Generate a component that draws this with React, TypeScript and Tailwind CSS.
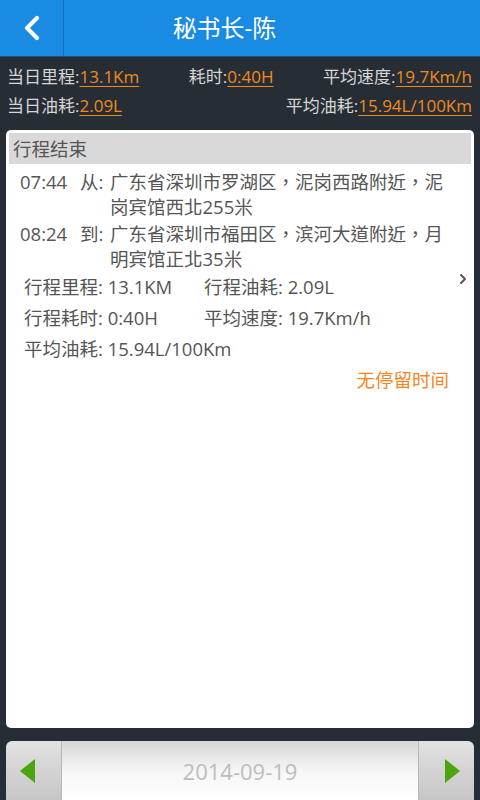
import { ChevronRight } from 'lucide-react';

const font = { fontFamily: '"Open Sans", "Noto Sans CJK SC", sans-serif' };
const tcFont = { fontFamily: '"Open Sans", "Noto Sans CJK TC", "Noto Sans CJK SC", sans-serif' };

const Stat = ({ label, value }: { label: string; value: string }) => (
  <span className="whitespace-nowrap">
    <span className="text-[#d6d6d6]">{label}</span>
    <span className="text-[#f08a1c] underline underline-offset-[3px] decoration-1">{value}</span>
  </span>
);

const App = () => {
  return (
    <div className="w-[480px] h-[800px] bg-[#272d35] flex flex-col overflow-hidden" style={font}>
      <header className="h-[57px] shrink-0 bg-[#1a8be3] border-b border-[#1d4f7e] flex">
        <button className="w-16 flex items-center justify-center border-r border-[#146fbd]">
          <svg width="20" height="26" viewBox="0 0 20 26">
            <path d="M15 3 L5 13 L15 23" fill="none" stroke="white" strokeWidth="4.2" strokeLinecap="round" strokeLinejoin="round" />
          </svg>
        </button>
        <h1 className="flex-1 flex items-center justify-center text-white text-[24px] pb-[1px]">秘书长-陈</h1>
        <div className="w-[95px]"></div>
      </header>

      <div className="shrink-0 text-[17px] leading-[29px] pt-[5px] pb-[10px] px-[7px] pr-[8px]">
        <div className="flex justify-between">
          <Stat label="当日里程:" value="13.1Km" />
          <Stat label="耗时:" value="0:40H" />
          <Stat label="平均速度:" value="19.7Km/h" />
        </div>
        <div className="flex justify-between">
          <Stat label="当日油耗:" value="2.09L" />
          <Stat label="平均油耗:" value="15.94L/100Km" />
        </div>
      </div>

      <div className="relative flex-1 mx-[6px] mb-[13px] bg-white rounded-[5px] p-[3px] text-[18.5px] text-[#555]">
        <div className="h-[31px] bg-[#d9d9d9] pl-[4px] flex items-center text-[#555]">行程结束</div>

        <div className="pl-[11px] pr-[20px] pt-[5px] leading-[25px]">
          <div className="flex">
            <span className="w-[60px] shrink-0">07:44</span>
            <span className="w-[30px] shrink-0">从:</span>
            <span className="flex-1" style={tcFont}>广东省深圳市罗湖区，泥岗西路附近，泥岗宾馆西北255米</span>
          </div>
          <div className="flex mt-[2px]">
            <span className="w-[60px] shrink-0">08:24</span>
            <span className="w-[30px] shrink-0">到:</span>
            <span className="flex-1" style={tcFont}>广东省深圳市福田区，滨河大道附近，月明宾馆正北35米</span>
          </div>
        </div>

        <div className="pl-[15px] pr-[22px] leading-[31px]">
          <div className="grid grid-cols-[180px_1fr]">
            <span>行程里程: 13.1KM</span>
            <span>行程油耗: 2.09L</span>
            <span>行程耗时: 0:40H</span>
            <span>平均速度: 19.7Km/h</span>
            <span className="col-span-2">平均油耗: 15.94L/100Km</span>
          </div>
          <div className="text-right text-[#f5861c]">无停留时间</div>
        </div>

        <ChevronRight className="absolute right-[3px] top-[141px] text-[#555]" size={16} strokeWidth={3} />
      </div>

      <div className="h-[59px] shrink-0 mx-[6px] rounded-t-[6px] overflow-hidden flex">
        <button className="w-[56px] bg-gradient-to-b from-[#e2e2e2] to-[#c6c6c6] flex items-center justify-center pr-[12px] border-r border-[#b8b8b8]">
          <svg width="15" height="24" viewBox="0 0 15 24">
            <path d="M15 0 L0 12 L15 24 Z" fill="#4ea40e" />
          </svg>
        </button>
        <div className="flex-1 bg-gradient-to-b from-[#d6d6d6] via-[#f6f6f6] to-white flex items-center justify-center text-[22px] text-[#bdbdbd] pt-[2px]">
          2014-09-19
        </div>
        <button className="w-[56px] bg-gradient-to-b from-[#e2e2e2] to-[#c6c6c6] flex items-center justify-center pl-[12px] border-l border-[#b8b8b8]">
          <svg width="15" height="24" viewBox="0 0 15 24">
            <path d="M0 0 L15 12 L0 24 Z" fill="#4ea40e" />
          </svg>
        </button>
      </div>
    </div>
  );
};

export default App;
